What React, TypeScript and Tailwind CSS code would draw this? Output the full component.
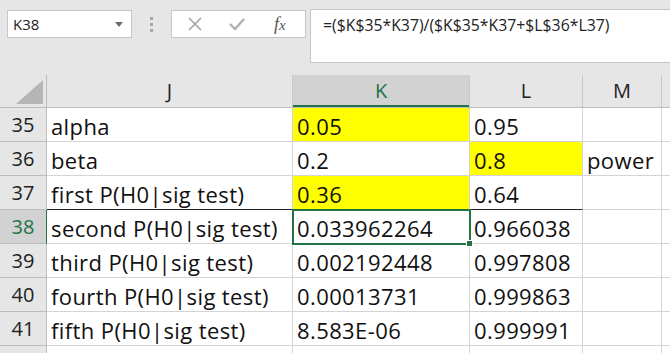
import React from "react";

type Cell = { text?: string; fill?: boolean; bottomDark?: boolean };

const cols = [
    { key: "J", w: "w-[246px]" },
    { key: "K", w: "w-[177px]" },
    { key: "L", w: "w-[113px]" },
    { key: "M", w: "w-[79px]" },
];

const rows: { n: number; label: string; cells: Cell[] }[] = [
    { n: 35, label: "35", cells: [{ text: "alpha" }, { text: "0.05", fill: true }, { text: "0.95" }, {}] },
    { n: 36, label: "36", cells: [{ text: "beta" }, { text: "0.2" }, { text: "0.8", fill: true }, { text: "power" }] },
    {
        n: 37,
        label: "37",
        cells: [
            { text: "first P(H0|sig test)", bottomDark: true },
            { text: "0.36", fill: true, bottomDark: true },
            { text: "0.64", bottomDark: true },
            {},
        ],
    },
    { n: 38, label: "38", cells: [{ text: "second P(H0|sig test)" }, { text: "0.033962264" }, { text: "0.966038" }, {}] },
    { n: 39, label: "39", cells: [{ text: "third P(H0|sig test)" }, { text: "0.002192448" }, { text: "0.997808" }, {}] },
    { n: 40, label: "40", cells: [{ text: "fourth P(H0|sig test)" }, { text: "0.00013731" }, { text: "0.999863" }, {}] },
    { n: 41, label: "41", cells: [{ text: "fifth P(H0|sig test)" }, { text: "8.583E-06" }, { text: "0.999991" }, {}] },
    { n: 42, label: "", cells: [{}, {}, {}, {}] },
];

function FormulaBar() {
    return (
        <div className="flex h-[75px] items-start pl-[7px] pt-[10px] font-['Open_Sans',sans-serif]">
            <div className="flex h-[28px] w-[125px] items-center justify-between border border-[#c6c6c6] bg-white pl-[5px] pr-[8px] text-[15px] text-[#222]">
                <span>K38</span>
                <svg width="8" height="5" viewBox="0 0 8 5">
                    <path d="M0 0 L8 0 L4 5 Z" fill="#6b6b6b" />
                </svg>
            </div>
            <div className="flex h-[28px] w-[39px] flex-col items-center justify-center gap-[3px]">
                <div className="h-[3px] w-[3px] bg-[#a6a6a6]" />
                <div className="h-[3px] w-[3px] bg-[#a6a6a6]" />
                <div className="h-[3px] w-[3px] bg-[#a6a6a6]" />
            </div>
            <div className="flex h-[28px] w-[135px] items-center border border-[#c6c6c6] bg-white pl-[15px]">
                <svg width="16" height="16" viewBox="0 0 16 16">
                    <path d="M2 2 L14 14 M14 2 L2 14" stroke="#a3a3a3" strokeWidth="1.6" fill="none" />
                </svg>
                <svg className="ml-[25px]" width="18" height="16" viewBox="0 0 18 16">
                    <path d="M2 8 L7 13 L16 3" stroke="#b0b0b0" strokeWidth="2.4" fill="none" />
                </svg>
                <span className="ml-[28px] font-['Liberation_Serif',serif] text-[18px] italic text-[#555]">
                    f<span className="text-[15px]">x</span>
                </span>
            </div>
            <div className="-mr-[10px] ml-[4px] -mt-[1px] h-[54px] flex-1 border border-[#c6c6c6] bg-white pl-[12px] pt-[4px] text-[15.8px] text-[#222]">
                =($K$35*K37)/($K$35*K37+$L$36*L37)
            </div>
        </div>
    );
}

function Grid() {
    return (
        <div className="font-['Open_Sans',sans-serif] text-[#111]">
            <div className="flex h-[33px] border-b border-[#bcbcbc] bg-[#e6e6e6]">
                <div className="relative w-[47px] border-r border-[#bcbcbc]">
                    <div className="absolute bottom-[3px] right-[3px] h-0 w-0 border-b-[24px] border-l-[27px] border-b-[#b5b5b5] border-l-transparent" />
                </div>
                {cols.map((c) => (
                    <div
                        key={c.key}
                        className={[
                            c.w,
                            "flex items-center justify-center border-r border-[#c8c8c8] text-[20px]",
                            c.key === "K" ? "bg-[#d2d2d2] text-[#217346] shadow-[inset_0_-2px_0_#217346]" : "text-[#222]",
                        ].join(" ")}
                    >
                        {c.key}
                    </div>
                ))}
                <div className="flex-1" />
            </div>
            {rows.map((r) => (
                <div key={r.n} className="flex h-[34px]">
                    <div
                        className={[
                            "flex w-[47px] items-end justify-center border-b border-r pb-[2px] text-[20px] leading-[28px]",
                            r.n === 38
                                ? "border-b-[#bcbcbc] border-r-[#217346] bg-[#d2d2d2] text-[#217346]"
                                : "border-[#bcbcbc] bg-[#e6e6e6] text-[#222]",
                        ].join(" ")}
                    >
                        {r.label}
                    </div>
                    {r.cells.map((c, i) => (
                        <div
                            key={i}
                            className={[
                                cols[i].w,
                                "relative flex items-end overflow-visible whitespace-nowrap border-r border-b pl-[4px] pb-[1px] text-[22px] leading-[28px] tracking-[0.4px]",
                                c.fill ? "bg-[#ffff00]" : "bg-white",
                                c.bottomDark ? "border-r-[#d4d4d4] border-b-[#222]" : "border-[#d4d4d4]",
                                r.n === 38 && i === 1 ? "outline-2 -outline-offset-1 outline-[#217346] z-10" : "",
                            ].join(" ")}
                        >
                            {c.text}
                            {r.n === 38 && i === 1 && (
                                <div className="absolute -bottom-[4px] -right-[4px] h-[7px] w-[7px] border border-white bg-[#217346]" />
                            )}
                        </div>
                    ))}
                    <div className="flex-1 border-b border-[#d4d4d4] bg-white" />
                </div>
            ))}
        </div>
    );
}

export default function App() {
    return (
        <div className="h-[353px] w-[670px] overflow-hidden bg-[#e6e6e6]">
            <FormulaBar />
            <Grid />
        </div>
    );
}
